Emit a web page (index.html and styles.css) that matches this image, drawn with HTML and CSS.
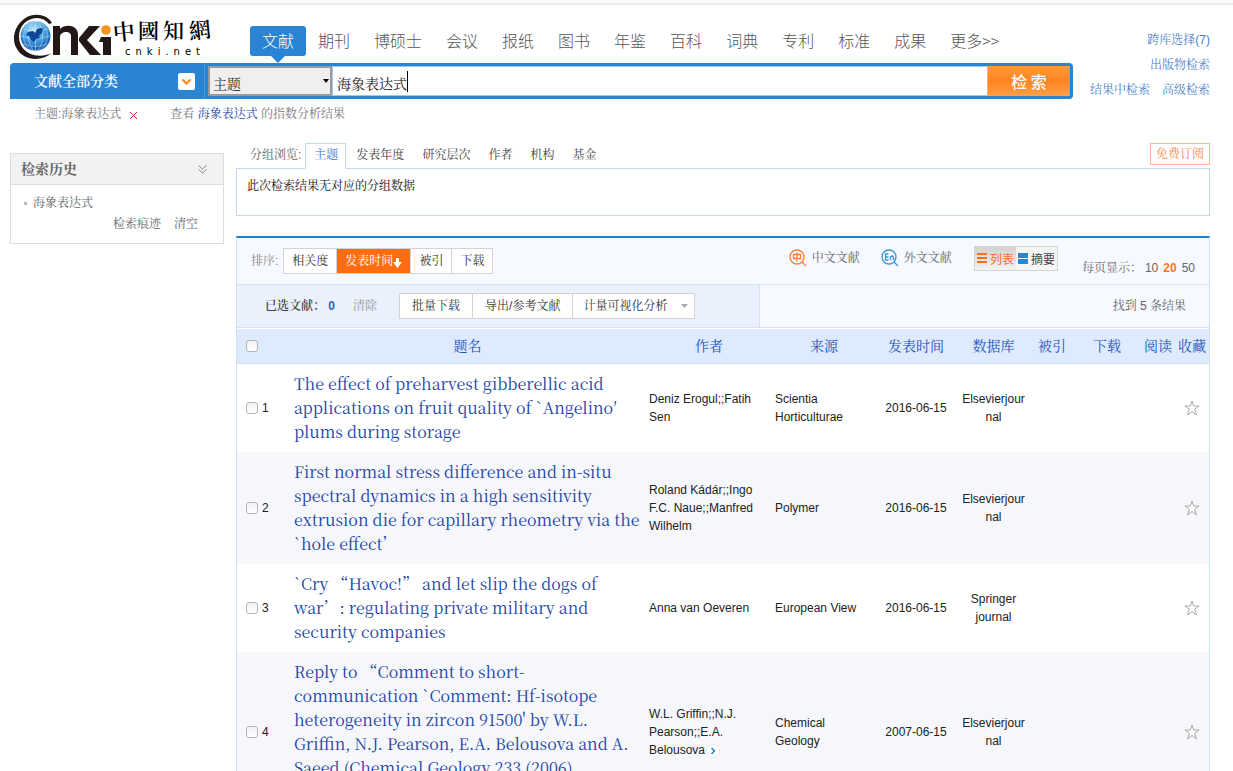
FILE: index.html
```
<!DOCTYPE html>
<html lang="zh-CN">
<head>
<meta charset="utf-8">
<title>中国知网</title>
<link rel="stylesheet" href="styles.css">
</head>
<body>
<div class="topline"></div>
<header class="header">
  <div class="header-main">
    <div class="brand-row">
      <svg class="logo" width="204" height="50" viewBox="0 0 204 50" role="img" aria-label="中国知网 cnki.net">
        <defs>
          <radialGradient id="globe" cx="45%" cy="30%" r="70%">
            <stop offset="0" stop-color="#c5e9fb"/><stop offset=".5" stop-color="#4aa5e2"/><stop offset="1" stop-color="#0b4ea2"/>
          </radialGradient>
        </defs>
        <path d="M39 10C34 1 20-1 11 6C1 13-2 27 4 36C11 48 28 49 39 40C28 45 15 43 9 34C4 26 5 14 14 8C22 3 31 4 36 11Z" fill="#231815"/>
        <circle cx="22.500" cy="23" r="15" fill="url(#globe)"/>
        <g fill="none" stroke="#d4effc" stroke-width=".6" opacity=".8">
          <ellipse cx="22.500" cy="23" rx="7" ry="15"/><ellipse cx="22.500" cy="23" rx="12" ry="15"/>
          <path d="M22.500 8V38M8 23Q22 28 37 23M10 16Q22 20 35 16M11 31Q22 36 34 31"/>
        </g>
        <path d="M15 19l5-1 2 2 2-4 4-1 2 1-1 4-3 3 1 2-4 1-2 3-3-2-2-4-3-1z" fill="#0c4797"/>
        <path d="M40 42V13h7v3c5-5 18-5 18 6v20h-7V23c0-6-11-5-11 1v18z" fill="#231815"/>
        <path d="M76 13h11L74 27l14 15H77L66 28v-3z" fill="#231815"/>
        <path d="M90 24h8v18h-8z" fill="#231815"/>
        <circle cx="93" cy="17" r="4.800" fill="#f7931e"/>
        <path d="M88 24h10v18h-8V29h-4z" fill="#231815"/>
        <g class="logo-cn">
          <text x="100" y="27" font-size="22" transform="rotate(-6 110 20)">中</text>
          <text x="125" y="25" font-size="21">國</text>
          <text x="150" y="25" font-size="21">知</text>
          <text x="176" y="25" font-size="22" transform="rotate(-6 188 18)">網</text>
        </g>
        <text class="logo-url" x="112" y="42">cnki.net</text>
      </svg>
      <nav class="nav">
        <a class="nav-item active" href="#">文献</a>
        <a class="nav-item" href="#">期刊</a>
        <a class="nav-item" href="#">博硕士</a>
        <a class="nav-item" href="#">会议</a>
        <a class="nav-item" href="#">报纸</a>
        <a class="nav-item" href="#">图书</a>
        <a class="nav-item" href="#">年鉴</a>
        <a class="nav-item" href="#">百科</a>
        <a class="nav-item" href="#">词典</a>
        <a class="nav-item" href="#">专利</a>
        <a class="nav-item" href="#">标准</a>
        <a class="nav-item" href="#">成果</a>
        <a class="nav-item" href="#">更多&gt;&gt;</a>
      </nav>
    </div>
    <form class="search">
      <button class="category" type="button">文献全部分类
        <svg width="17" height="17" viewBox="0 0 17 17"><rect width="17" height="17" rx="2" fill="#fff"/><path d="M4.500 6.500l4 4 4-4" fill="none" stroke="#ff8a1e" stroke-width="2.200"/></svg>
      </button>
      <div class="field-wrap">
        <select class="field" aria-label="检索字段"><option>主题</option></select>
        <svg class="field-arrow" width="6" height="4" viewBox="0 0 6 4"><path d="M0 0h6L3 4z" fill="#000"/></svg>
      </div>
      <div class="query-wrap">
        <input class="query" type="text" value="海象表达式" aria-label="检索词">
        <span class="caret"></span>
      </div>
      <button class="submit" type="button">检 索</button>
    </form>
    <div class="crumbs">
      <span>主题:海象表达式</span>
      <button class="crumb-close" type="button" aria-label="移除"><svg width="9" height="9" viewBox="0 0 9 9"><path d="M1 1l7 7M8 1l-7 7" stroke="#d9303a"/></svg></button>
      <span>查看 <a href="#">海象表达式</a> 的指数分析结果</span>
    </div>
  </div>
  <div class="header-links">
    <a href="#">跨库选择(7)</a>
    <a href="#">出版物检索</a>
    <div class="link-pair"><a href="#">结果中检索</a><a href="#">高级检索</a></div>
  </div>
</header>

<div class="content">
  <aside class="history">
    <h2 class="history-head">检索历史
      <svg width="9" height="9" viewBox="0 0 9 9" fill="none" stroke="#888"><path d="M.5.5l4 3.500 4-3.500M.5 4.500l4 3.500 4-3.500"/></svg>
    </h2>
    <div class="history-body">
      <a class="history-item" href="#">海象表达式</a>
      <div class="history-tools"><a href="#">检索痕迹</a><a href="#">清空</a></div>
    </div>
  </aside>

  <main class="main">
    <div class="group-row">
      <span class="group-label">分组浏览:</span>
      <a class="group-tab active" href="#">主题</a>
      <a class="group-tab" href="#">发表年度</a>
      <a class="group-tab" href="#">研究层次</a>
      <a class="group-tab" href="#">作者</a>
      <a class="group-tab" href="#">机构</a>
      <a class="group-tab" href="#">基金</a>
      <a class="subscribe" href="#">免费订阅</a>
    </div>
    <div class="group-box">此次检索结果无对应的分组数据</div>

    <section class="results">
      <div class="sort-row">
        <span class="sort-label">排序:</span>
        <div class="btn-group">
          <button type="button">相关度</button>
          <button type="button" class="on">发表时间<svg width="9" height="10" viewBox="0 0 9 10"><path d="M3 0h3v4h3L4.500 10 0 4h3z" fill="#fff"/></svg></button>
          <button type="button">被引</button>
          <button type="button">下载</button>
        </div>
        <div class="sort-right">
          <a class="lang" href="#"><svg width="18" height="19" viewBox="0 0 18 19" fill="none" stroke="#ff7f36" stroke-width="1.300"><circle cx="8" cy="9" r="7"/><path d="M13 14l4 4M4.500 6.500h7v4h-7zM8 4.500v9"/></svg>中文文献</a>
          <a class="lang" href="#"><svg width="18" height="19" viewBox="0 0 18 19" fill="none" stroke="#3d95d9" stroke-width="1.300"><circle cx="8" cy="9" r="7"/><path d="M13 14l4 4M7.500 6H4.500v6h3M4.500 9h3M9.500 12V8M9.500 9.500c0-2 3-2 3 0V12"/></svg>外文文献</a>
          <div class="view">
            <button type="button" class="on"><svg width="11" height="11" viewBox="0 0 11 11"><path d="M0 0h10v2H0zM0 4h10v2H0zM0 8h10v2H0z" fill="#ff6e1b"/></svg>列表</button>
            <button type="button"><svg width="11" height="11" viewBox="0 0 11 11"><path d="M0 0h10v5H0zM0 6h10v5H0z" fill="#2a84d4"/></svg>摘要</button>
          </div>
          <div class="per-page">每页显示： <a href="#">10</a><a class="on" href="#">20</a><a href="#">50</a></div>
        </div>
      </div>
      <div class="action-row">
        <div class="actions">
          <span class="picked">已选文献： <b>0</b></span>
          <a class="clear" href="#">清除</a>
          <div class="btn-group">
            <button type="button">批量下载</button>
            <button type="button">导出/参考文献</button>
            <button type="button" class="drop">计量可视化分析<svg width="7" height="4" viewBox="0 0 7 4"><path d="M0 0h7L3.500 4z" fill="#aaa"/></svg></button>
          </div>
        </div>
        <span class="found">找到 5 条结果</span>
      </div>
      <table class="table">
        <colgroup><col class="c-check"><col><col class="c-author"><col class="c-source"><col class="c-date"><col class="c-db"><col class="c-cite"><col class="c-down"><col class="c-read"><col class="c-read"></colgroup>
        <thead>
          <tr><th class="check"><input type="checkbox" aria-label="全选"></th><th>题名</th><th>作者</th><th>来源</th><th>发表时间</th><th>数据库</th><th>被引</th><th>下载</th><th>阅读</th><th>收藏</th></tr>
        </thead>
        <tbody>
          <tr>
            <td class="check"><label><input type="checkbox">1</label></td>
            <td class="title"><a href="#">The effect of preharvest gibberellic acid<br>applications on fruit quality of `Angelino′<br>plums during storage</a></td>
            <td>Deniz Erogul;;Fatih Sen</td><td class="source">Scientia Horticulturae</td><td class="mid">2016-06-15</td><td class="mid db">Elsevierjournal</td><td></td><td></td><td></td>
            <td class="fav"><button type="button" aria-label="收藏"><svg width="16" height="16" viewBox="0 0 16 16"><path d="M8 1l1.700 5H15l-4.300 3.200L12.500 15 8 11.500 3.500 15l1.800-5.800L1 6h5.300z" fill="#fff" stroke="#aaa"/></svg></button></td>
          </tr>
          <tr>
            <td class="check"><label><input type="checkbox">2</label></td>
            <td class="title"><a href="#">First normal stress difference and in-situ<br>spectral dynamics in a high sensitivity<br>extrusion die for capillary rheometry via the<br>`hole effect’</a></td>
            <td>Roland Kádár;;Ingo F.C. Naue;;Manfred Wilhelm</td><td class="source">Polymer</td><td class="mid">2016-06-15</td><td class="mid db">Elsevierjournal</td><td></td><td></td><td></td>
            <td class="fav"><button type="button" aria-label="收藏"><svg width="16" height="16" viewBox="0 0 16 16"><path d="M8 1l1.700 5H15l-4.300 3.200L12.500 15 8 11.500 3.500 15l1.800-5.800L1 6h5.300z" fill="#fff" stroke="#aaa"/></svg></button></td>
          </tr>
          <tr>
            <td class="check"><label><input type="checkbox">3</label></td>
            <td class="title"><a href="#">`Cry “Havoc!” and let slip the dogs of<br>war’: regulating private military and<br>security companies</a></td>
            <td>Anna van Oeveren</td><td class="source">European View</td><td class="mid">2016-06-15</td><td class="mid db">Springer journal</td><td></td><td></td><td></td>
            <td class="fav"><button type="button" aria-label="收藏"><svg width="16" height="16" viewBox="0 0 16 16"><path d="M8 1l1.700 5H15l-4.300 3.200L12.500 15 8 11.500 3.500 15l1.800-5.800L1 6h5.300z" fill="#fff" stroke="#aaa"/></svg></button></td>
          </tr>
          <tr class="tall">
            <td class="check"><label><input type="checkbox">4</label></td>
            <td class="title"><a href="#">Reply to “Comment to short-<br>communication `Comment: Hf-isotope<br>heterogeneity in zircon 91500' by W.L.<br>Griffin, N.J. Pearson, E.A. Belousova and A.<br>Saeed (Chemical Geology 233 (2006)</a></td>
            <td>W.L. Griffin;;N.J. Pearson;;E.A. Belousova<svg class="more" width="14" height="14" viewBox="0 0 14 14"><circle cx="7" cy="7" r="6.500" fill="#fff" stroke="#e4e8ee"/><path d="M5.500 4l3 3-3 3" fill="none" stroke="#2583d0" stroke-width="1.500"/></svg></td><td class="source">Chemical Geology</td><td class="mid">2007-06-15</td><td class="mid db">Elsevierjournal</td><td></td><td></td><td></td>
            <td class="fav"><button type="button" aria-label="收藏"><svg width="16" height="16" viewBox="0 0 16 16"><path d="M8 1l1.700 5H15l-4.300 3.200L12.500 15 8 11.500 3.500 15l1.800-5.800L1 6h5.300z" fill="#fff" stroke="#aaa"/></svg></button></td>
          </tr>
        </tbody>
      </table>
    </section>
  </main>
</div>
</body>
</html>
```
FILE: styles.css
```
* { box-sizing: border-box; }
body {
  margin: 0;
  background: #fff;
  color: #222;
  font: 12px/18px "Liberation Sans", "Noto Serif CJK SC", "Noto Sans CJK SC", sans-serif;
}
a { color: inherit; text-decoration: none; }
button, input, select { font: inherit; color: inherit; margin: 0; }
button { padding: 0; border: 0; background: none; cursor: pointer; }
h2 { margin: 0; }
svg { flex: none; }

.topline { height: 5px; background: #fafafa; border-bottom: 2px solid #ebebeb; }

.header { display: flex; padding: 0 23px 0 10px; }
.header-main { flex: 1; min-width: 0; }
.brand-row { display: flex; height: 58px; padding: 8px 0 0 3px; }
.logo { margin-right: 33px; overflow: visible; }
.logo-cn { font-family: "Noto Serif CJK TC", "Noto Sans CJK TC", sans-serif; font-weight: 600; }
.logo-url { font: 10px "DejaVu Sans", sans-serif; letter-spacing: 5px; }
.nav { display: flex; padding-top: 13px; }
.nav-item {
  position: relative;
  height: 30px;
  padding: 0 12px;
  font: 16px/28px "Noto Sans CJK SC", sans-serif;
  color: #555;
  font-weight: 300;
  white-space: nowrap;
}
.nav-item.active { background: #2a84d4; color: #fff; border-radius: 3px; }
.nav-item.active::after {
  content: "";
  position: absolute;
  top: 30px;
  left: 21px;
  border: 7px solid transparent;
  border-top-color: #2a84d4;
  border-bottom: 0;
}

.search { display: flex; height: 36px; padding: 3px 3px 3px 0; background: #2a84d4; border-radius: 4px 4px 4px 0; }
.category {
  display: flex;
  align-items: center;
  justify-content: space-between;
  width: 195px;
  margin: -3px 3px -3px 0;
  padding: 0 9px 0 24px;
  border-right: 1px solid #4a99df;
  color: #fff;
  font-size: 14px;
  font-weight: 600;
}
.field-wrap { position: relative; width: 124px; }
.field {
  appearance: none;
  width: 100%;
  height: 30px;
  padding: 5px 3px 0;
  border: 2px solid #9a9a9a;
  border-radius: 0;
  background: #f0efed;
  color: #333;
  font-size: 14px;
}
.field-arrow { position: absolute; right: 3px; top: 13px; }
.query-wrap { position: relative; flex: 1; min-width: 0; }
.query {
  display: block;
  width: 100%;
  height: 30px;
  padding: 3px 4px 0;
  border: 1px solid #9cc8f3;
  outline: 0;
  background: #fff;
  color: #222;
  font-size: 14px;
}
.caret { position: absolute; left: 75px; top: 5px; width: 1px; height: 21px; background: #000; }
.submit {
  width: 82px;
  background: linear-gradient(#ff9c3b, #ff8420 50%, #ffa046);
  color: #fff;
  font: 500 16px/28px "Noto Sans CJK SC", sans-serif;
}
.crumbs { display: flex; align-items: center; height: 28px; padding: 2px 0 0 24px; color: #777; }
.crumb-close { display: flex; margin: 2px 32px 0 8px; }
.crumbs a { color: #1f49a6; }
.header-links { display: flex; flex-direction: column; align-items: flex-end; gap: 7px; width: 137px; padding-top: 26px; color: #4a7fc6; }
.link-pair { display: flex; gap: 12px; }

.content { display: flex; align-items: flex-start; gap: 12px; padding: 16px 23px 0 10px; }
.history { width: 214px; margin-top: 10px; border: 1px solid #ddd; color: #666; }
.history-head {
  display: flex;
  align-items: center;
  justify-content: space-between;
  height: 31px;
  padding: 0 16px 0 10px;
  background: #f2f2f2;
  border-bottom: 1px solid #ddd;
  font-size: 14px;
  font-weight: 700;
}
.history-body { padding: 9px 25px 10px 13px; }
.history-item { display: flex; align-items: center; gap: 6px; }
.history-item::before { content: ""; width: 3px; height: 3px; background: #bbb; }
.history-tools { display: flex; justify-content: flex-end; gap: 13px; padding-top: 3px; }

.main { flex: 1; min-width: 0; }
.group-row { display: flex; align-items: flex-start; height: 25px; padding-left: 14px; color: #444; }
.group-label { padding-top: 3px; margin-right: 4px; color: #666; }
.group-tab { padding: 3px 9px; }
.group-tab.active { height: 26px; margin-right: 2px; padding: 2px 7px 2px 8px; border: 1px solid #c6d6ec; border-bottom-color: #fff; background: #fff; color: #3d76c4; z-index: 1; }
.group-tab.active + .group-tab { padding-left: 8px; }
.subscribe { margin-left: auto; padding: 0 5px; height: 22px; line-height: 20px; border: 1px solid #ffb894; color: #ff8246; }
.group-box { height: 48px; padding: 8px 10px; border: 1px solid #c6d6ec; color: #111; }

.results { margin-top: 20px; border: 1px solid #d3e1f5; border-top: 2px solid #2080d0; }
.sort-row { display: flex; align-items: flex-start; height: 47px; padding: 10px 14px 0; background: #f6f9ff; border-bottom: 1px solid #d6e2f3; }
.sort-label { margin: 4px 5px 0 0; color: #888; }
.btn-group { display: flex; border: 1px solid #d3d3d3; background: #fff; color: #333; }
.btn-group button { display: flex; align-items: center; height: 24px; padding: 0 8px; }
.btn-group button + button { border-left: 1px solid #d3d3d3; }
.btn-group .on { background: #ff6d10; color: #fff; }
.btn-group .on svg { margin-top: 4px; }
.sort-right { display: flex; align-items: flex-start; margin-left: auto; color: #666; }
.lang { display: flex; align-items: center; gap: 5px; margin-right: 21px; }
.view { display: flex; margin: -2px 24px 0 1px; border: 1px solid #d5d5d5; background: #f5f5f5; color: #444; font-family: "Noto Sans CJK SC", sans-serif; }
.view button { display: flex; align-items: center; gap: 2px; height: 23px; padding: 0 2px; }
.view .on { background: linear-gradient(#d2d2d2, #f3f3f3); color: #ff6e1b; }
.per-page { display: flex; gap: 5px; padding-top: 11px; }
.per-page .on { color: #ff7420; font-weight: bold; }
.per-page a:first-child { margin-left: -2px; }

.action-row { display: flex; justify-content: space-between; height: 43px; background: #f6f9ff; border-bottom: 1px solid #d6e2f3; }
.actions { display: flex; align-items: center; width: 523px; padding-left: 28px; background: #eaf1fd; border-right: 1px solid #d6e2f3; }
.picked { color: #444; font-weight: 600; }
.picked b { color: #2865b5; }
.clear { margin: 0 22px 0 18px; color: #999; }
.actions .btn-group button { padding: 0 12px; }
.actions .btn-group .drop { padding: 0 6px 0 10px; gap: 14px; }
.found { padding: 12px 23px 0 0; color: #666; }

.table { width: 100%; table-layout: fixed; border-collapse: collapse; margin-top: 1px; }
.c-check { width: 52px; }
.c-author { width: 126px; }
.c-source { width: 104px; }
.c-date { width: 80px; }
.c-db { width: 75px; }
.c-cite { width: 42px; }
.c-down { width: 68px; }
.c-read { width: 34px; }
.table th { height: 34px; padding: 0; background: #deeafe; border-bottom: 1px solid #cfdff5; color: #1d54bb; font-size: 14px; font-weight: 400; }
.table td { padding: 8px 3px; vertical-align: middle; }
.table tbody tr:nth-child(even) { background: #f5f7fb; }
.table .check { padding: 0 0 0 9px; text-align: left; }
.check label { display: flex; align-items: center; gap: 4px; }
.check input {
  appearance: none;
  display: block;
  width: 12px;
  height: 12px;
  border: 1px solid #b5b5b5;
  border-radius: 3px;
  background: linear-gradient(#f2f2f2, #fff);
}
.table .title {
  padding: 8px 0 8px 5px;
  color: #1c44a5;
  font: 16px/24px "Noto Serif CJK SC", "Noto Serif", "Liberation Serif", serif;
  vertical-align: top;
  white-space: nowrap;
}
.table .source { padding-right: 16px; }
.table .mid { text-align: center; }
.table .db { padding: 8px 6px; word-break: break-word; }
.fav button { display: block; margin: 0 auto; }
.fav svg { display: block; }
.more { vertical-align: -4px; margin-left: 1px; }
.tall { height: 160px; }
```
